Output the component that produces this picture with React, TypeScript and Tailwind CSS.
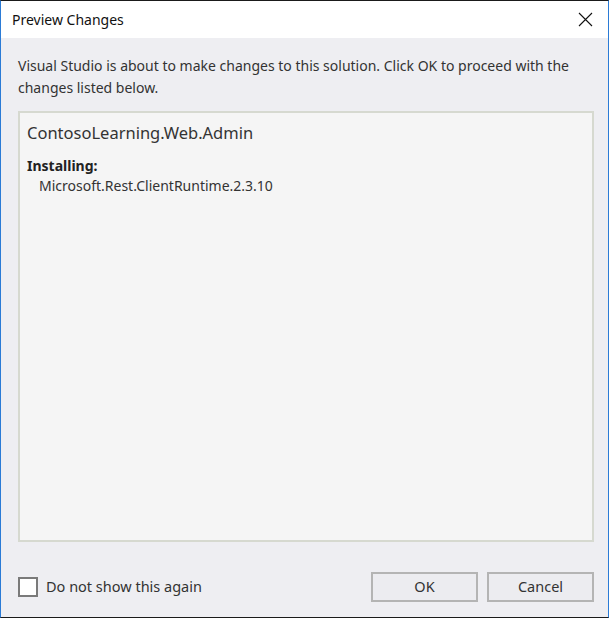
const font = { fontFamily: '"Noto Sans", "Open Sans", sans-serif' };

export default function App() {
  return (
    <div
      className="w-[609px] h-[618px] flex flex-col border-y border-y-[#1a1a1a] border-x border-x-[#2b7bd6] bg-[#eeeef2] text-[#1e1e1e] overflow-hidden"
      style={font}
    >
      <div className="h-[37px] shrink-0 bg-white flex items-center justify-between pl-[11px] pr-[15px]">
        <span className="text-[14px] text-[#111]">Preview Changes</span>
        <svg width="15" height="15" viewBox="0 0 15 15" className="text-[#111]">
          <path d="M1 1L14 14M14 1L1 14" stroke="currentColor" strokeWidth="1.1" fill="none" />
        </svg>
      </div>

      <div className="flex-1 flex flex-col pl-[17px] pr-[14px] pt-[17px] pb-[15px]">
        <p className="text-[14px] leading-[22px] text-[#333]">
          Visual Studio is about to make changes to this solution. Click OK to proceed with the changes listed below.
        </p>

        <div className="mt-[12px] h-[431px] border-2 border-[#d6d9d0] bg-[#f5f5f5] px-[7px] pt-[8px]">
          <div className="text-[16.5px] leading-[24px] text-[#333]">ContosoLearning.Web.Admin</div>
          <div className="mt-[11px] text-[14px] leading-[19px] font-bold text-[#222]">Installing:</div>
          <div className="mt-[1px] pl-[12px] text-[14px] leading-[20px] text-[#333]">Microsoft.Rest.ClientRuntime.2.3.10</div>
        </div>

        <div className="mt-auto flex items-center justify-between">
          <label className="flex items-center gap-[8px]">
            <span className="h-[20px] w-[20px] border-2 border-[#7a7a7a] bg-white" />
            <span className="text-[14.5px] text-[#333]">Do not show this again</span>
          </label>
          <div className="flex gap-[9px]">
            <button className="w-[107px] h-[30px] border-2 border-[#b4b4b4] bg-[#ececf0] text-[14.5px] text-[#333]">OK</button>
            <button className="w-[107px] h-[30px] border-2 border-[#b4b4b4] bg-[#ececf0] text-[14.5px] text-[#333]">Cancel</button>
          </div>
        </div>
      </div>
    </div>
  );
}
